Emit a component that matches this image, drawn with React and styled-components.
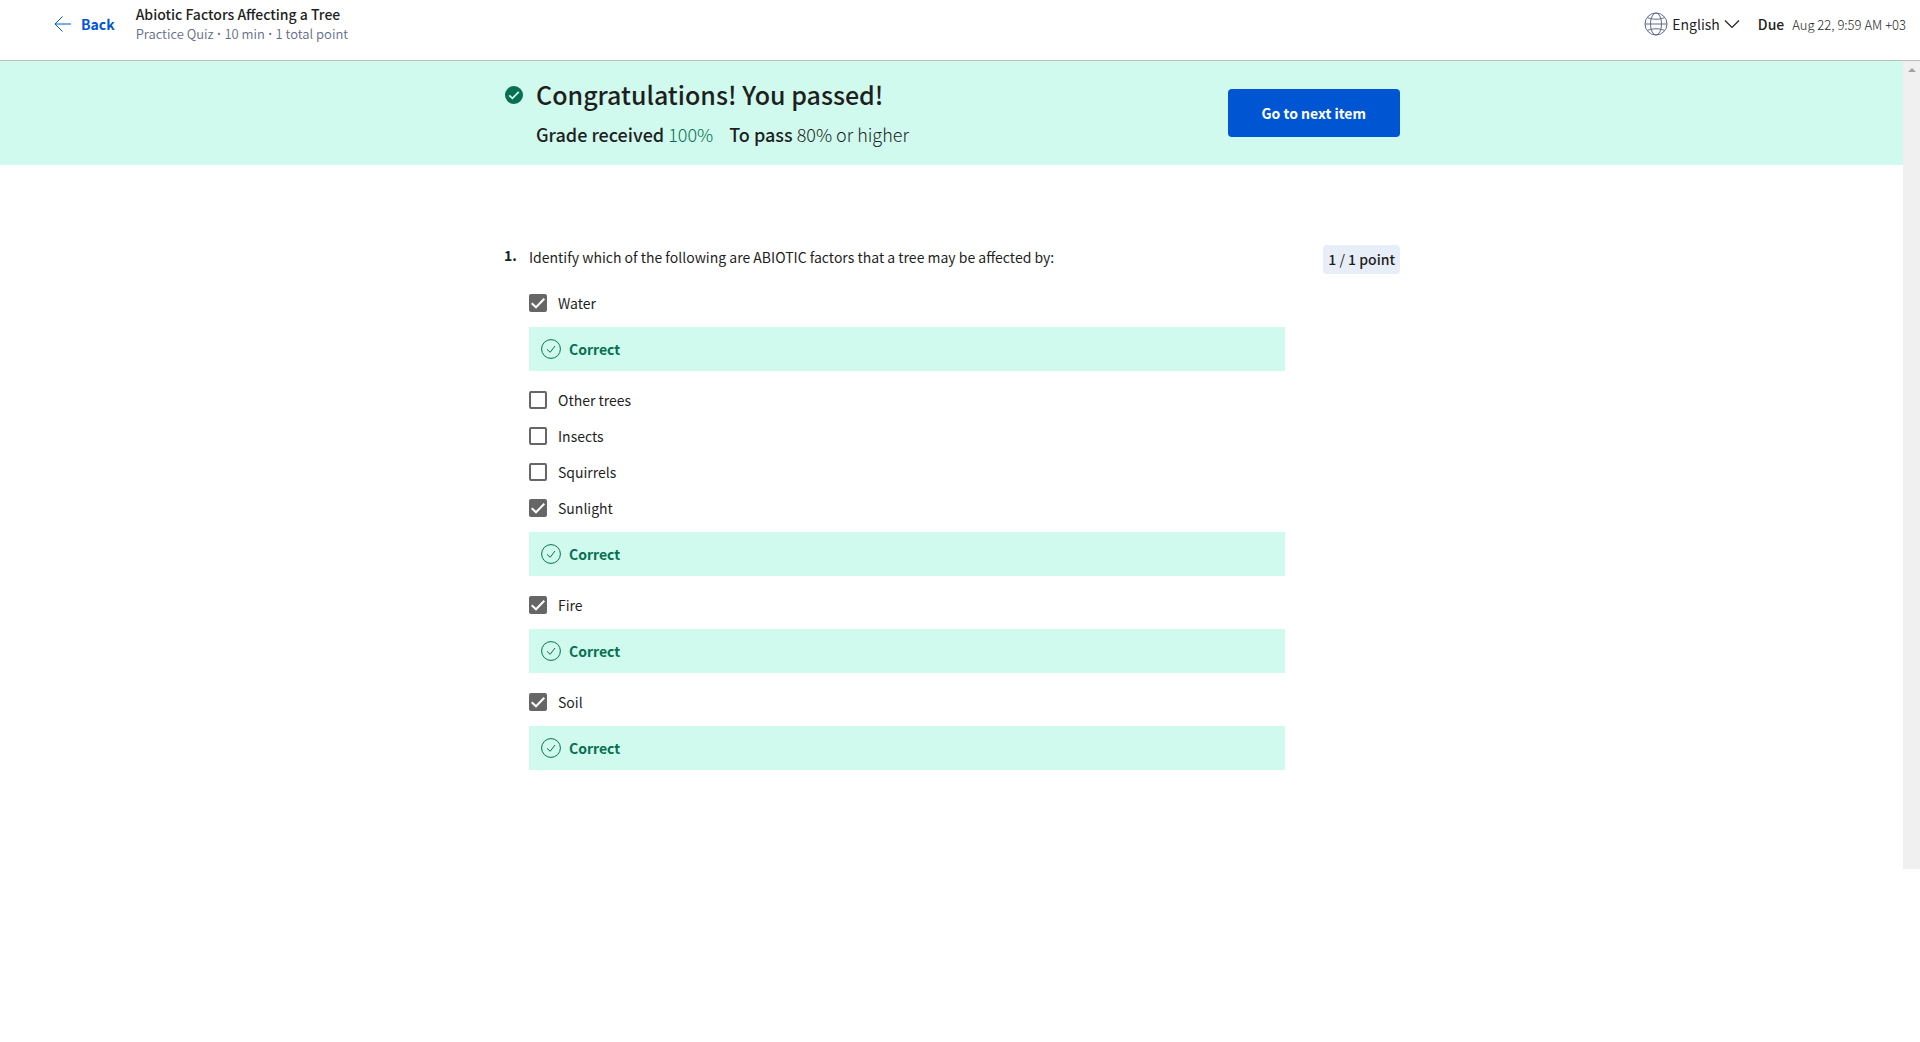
import React from "react";
import styled, { createGlobalStyle } from "styled-components";

const GlobalStyle = createGlobalStyle`
  *, *::before, *::after { box-sizing: border-box; }
  body {
    margin: 0;
    background: #fff;
    color: #1f1f1f;
    font-family: "Noto Sans CJK SC", "Open Sans", sans-serif;
    font-size: 14px;
    line-height: 20px;
  }
  h1, h2, p, ul, ol { margin: 0; padding: 0; }
  ul, ol { list-style: none; }
  button, select, input { font: inherit; color: inherit; }
`;

const Header = styled.header`
  display: flex;
  justify-content: space-between;
  align-items: center;
  padding: 3px 14px 15px 52px;
  border-bottom: 1px solid #bdbdbd;
`;

const HeaderGroup = styled.div`
  display: flex;
  align-items: center;
`;

const BackLink = styled.a`
  display: flex;
  align-items: center;
  gap: 9px;
  margin-right: 21px;
  color: #0056d2;
  font-weight: 700;
  text-decoration: none;
`;

const ItemTitle = styled.h1`
  font-size: 14px;
  line-height: 22px;
  font-weight: 500;
  color: #1f1f1f;
`;

const ItemMeta = styled.p`
  font-size: 13px;
  line-height: 18px;
  font-weight: 350;
  color: #636c88;
  padding-bottom: 2px;
`;

const Bullet = styled.span`
  font-family: "Open Sans", sans-serif;
`;

const LanguagePicker = styled.label`
  display: flex;
  align-items: center;
  gap: 4px;
  margin-right: 18px;
`;

const LanguageSelect = styled.select`
  appearance: none;
  field-sizing: content;
  border: 0;
  padding: 0;
  background: transparent;
  line-height: 20px;
`;

const Due = styled.p`
  display: flex;
  align-items: baseline;
  gap: 8px;
`;

const DueLabel = styled.strong`
  font-weight: 500;
`;

const DueDate = styled.time`
  font-size: 13px;
  font-weight: 300;
`;

const Viewport = styled.div`
  display: flex;
  align-items: stretch;
`;

const Content = styled.main`
  flex: 1;
  min-width: 0;
  padding-bottom: 88px;
`;

const ScrollTrack = styled.div`
  flex: none;
  width: 17px;
  padding-top: 7px;
  display: flex;
  justify-content: center;
  align-items: flex-start;
  background: #f0f0f0;
`;

const Banner = styled.section`
  background: #cffaed;
`;

const Column = styled.div`
  display: flex;
  align-items: flex-start;
  max-width: 897px;
  margin: 0 auto;
`;

const BannerColumn = styled(Column)`
  gap: 13px;
  padding: 15px 0 19px 2px;
`;

const BannerIcon = styled.span`
  display: flex;
  align-items: center;
  height: 38px;
`;

const BannerText = styled.div`
  flex: 1;
`;

const BannerTitle = styled.h2`
  font-size: 25px;
  line-height: 36px;
  font-weight: 500;
`;

const Grades = styled.p`
  display: flex;
  gap: 16px;
  margin-top: 10px;
  font-size: 18px;
  line-height: 24px;
  font-weight: 300;
`;

const GradeLabel = styled.strong`
  font-weight: 500;
`;

const GradeValue = styled.span`
  color: ${(p) => (p.$passed ? "#087051" : "inherit")};
`;

const NextButton = styled.button`
  margin-top: 13px;
  padding: 14px 34px;
  border: 0;
  border-radius: 4px;
  background: #0056d2;
  color: #fff;
  font-weight: 700;
  line-height: 20px;
`;

const QuestionColumn = styled(Column)`
  padding-top: 80px;
`;

const QuestionNumber = styled.span`
  flex: none;
  width: 26px;
  padding-left: 1px;
  font-weight: 700;
  line-height: 20px;
`;

const QuestionBody = styled.fieldset`
  flex: 1;
  max-width: 756px;
  min-width: 0;
  margin: 0;
  padding: 0;
  border: 0;
`;

const Prompt = styled.legend`
  padding: 1px 0 17px;
  line-height: 22px;
`;

const Points = styled.p`
  margin-left: auto;
  padding: 4px 5px;
  border-radius: 4px;
  background: #e8eef7;
  line-height: 21px;
  font-weight: 500;
`;

const Slash = styled.span`
  font-weight: 400;
`;

const OptionLabel = styled.label`
  display: flex;
  align-items: center;
  gap: 11px;
  height: 36px;
`;

const Checkbox = styled.input`
  appearance: none;
  flex: none;
  width: 18px;
  height: 18px;
  margin: 0;
  border: 2px solid #666;
  border-radius: 2px;
  background: #fff;

  &:checked {
    background: #666;
  }
`;

const BoxWrap = styled.span`
  position: relative;
  display: flex;
`;

const Tick = styled.svg`
  position: absolute;
  inset: 0;
  pointer-events: none;
`;

const Feedback = styled.p`
  display: flex;
  align-items: center;
  gap: 8px;
  height: 44px;
  margin: 6px 0 11px;
  padding-left: 12px;
  background: #cffaed;
  color: #087051;
  font-weight: 700;
`;

const BackIcon = () => (
  <svg width="20" height="20" viewBox="0 0 20 20" fill="none" stroke="currentColor" aria-hidden="true">
    <path d="M10.5 2.5 L3 10 L10.5 17.5 M3 10 H19" />
  </svg>
);

const GlobeIcon = () => (
  <svg width="24" height="24" viewBox="0 0 24 24" fill="none" stroke="#636c88" aria-hidden="true">
    <circle cx="12" cy="12" r="11" />
    <ellipse cx="12" cy="12" rx="5.5" ry="11" />
    <path d="M1 12 H23 M3.5 5.5 C8 7.8 16 7.8 20.5 5.5 M3.5 18.5 C8 16.2 16 16.2 20.5 18.5" />
  </svg>
);

const ChevronIcon = () => (
  <svg width="16" height="10" viewBox="0 0 16 10" fill="none" stroke="#1f1f1f" strokeWidth="1.2" aria-hidden="true">
    <path d="M1 1.5 L8 8.5 L15 1.5" />
  </svg>
);

const PassedIcon = () => (
  <svg width="18" height="18" viewBox="0 0 18 18" fill="none" aria-hidden="true">
    <circle cx="9" cy="9" r="9" fill="#087051" />
    <path d="M4.2 9.3 L7.4 12.3 L13.8 5.8" stroke="#cffaed" strokeWidth="1.8" />
  </svg>
);

const CorrectIcon = () => (
  <svg width="20" height="20" viewBox="0 0 20 20" fill="none" stroke="currentColor" aria-hidden="true">
    <circle cx="10" cy="10" r="9.4" />
    <path d="M6 10.3 L9.2 13.3 L14 7" />
  </svg>
);

const OPTIONS = [
  { text: "Water", checked: true },
  { text: "Other trees", checked: false },
  { text: "Insects", checked: false },
  { text: "Squirrels", checked: false },
  { text: "Sunlight", checked: true },
  { text: "Fire", checked: true },
  { text: "Soil", checked: true },
];

function Option({ text, checked }) {
  return (
    <li>
      <OptionLabel>
        <BoxWrap>
          <Checkbox type="checkbox" checked={checked} readOnly />
          {checked && (
            <Tick width="18" height="18" viewBox="0 0 18 18" fill="none" stroke="#fff" strokeWidth="2" aria-hidden="true">
              <path d="M2.7 9.2 L7 13.3 L15.3 4.8" />
            </Tick>
          )}
        </BoxWrap>
        {text}
      </OptionLabel>
      {checked && (
        <Feedback>
          <CorrectIcon />
          Correct
        </Feedback>
      )}
    </li>
  );
}

export default function App() {
  return (
    <>
      <GlobalStyle />
      <Header>
        <HeaderGroup>
          <BackLink href="#back">
            <BackIcon />
            Back
          </BackLink>
          <div>
            <ItemTitle>Abiotic Factors Affecting a Tree</ItemTitle>
            <ItemMeta>
              Practice Quiz <Bullet>•</Bullet> 10 min <Bullet>•</Bullet> 1 total point
            </ItemMeta>
          </div>
        </HeaderGroup>
        <HeaderGroup>
          <LanguagePicker>
            <GlobeIcon />
            <LanguageSelect aria-label="Language" defaultValue="English">
              <option>English</option>
            </LanguageSelect>
            <ChevronIcon />
          </LanguagePicker>
          <Due>
            <DueLabel>Due</DueLabel>
            <DueDate>Aug 22, 9:59 AM +03</DueDate>
          </Due>
        </HeaderGroup>
      </Header>
      <Viewport>
        <Content>
          <Banner>
            <BannerColumn>
              <BannerIcon>
                <PassedIcon />
              </BannerIcon>
              <BannerText>
                <BannerTitle>Congratulations! You passed!</BannerTitle>
                <Grades>
                  <span>
                    <GradeLabel>Grade received</GradeLabel> <GradeValue $passed>100%</GradeValue>
                  </span>
                  <span>
                    <GradeLabel>To pass</GradeLabel> <GradeValue>80% or higher</GradeValue>
                  </span>
                </Grades>
              </BannerText>
              <NextButton type="button">Go to next item</NextButton>
            </BannerColumn>
          </Banner>
          <QuestionColumn>
            <QuestionNumber>1.</QuestionNumber>
            <QuestionBody>
              <Prompt>Identify which of the following are ABIOTIC factors that a tree may be affected by:</Prompt>
              <ul>
                {OPTIONS.map((option) => (
                  <Option key={option.text} {...option} />
                ))}
              </ul>
            </QuestionBody>
            <Points>
              1 <Slash>/</Slash> 1 point
            </Points>
          </QuestionColumn>
        </Content>
        <ScrollTrack aria-hidden="true">
          <svg width="8" height="4" viewBox="0 0 8 4">
            <path d="M0 4 L4 0 L8 4 Z" fill="#a3a3a3" />
          </svg>
        </ScrollTrack>
      </Viewport>
    </>
  );
}
